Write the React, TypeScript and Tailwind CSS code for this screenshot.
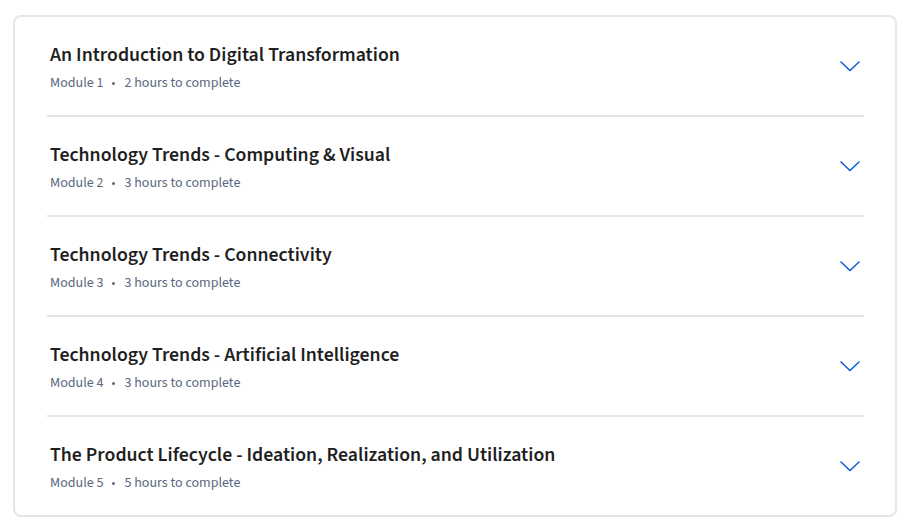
import React from 'react';

const modules = [
  { title: 'An Introduction to Digital Transformation', module: 'Module 1', hours: '2 hours to complete' },
  { title: 'Technology Trends - Computing & Visual', module: 'Module 2', hours: '3 hours to complete' },
  { title: 'Technology Trends - Connectivity', module: 'Module 3', hours: '3 hours to complete' },
  { title: 'Technology Trends - Artificial Intelligence', module: 'Module 4', hours: '3 hours to complete' },
  { title: 'The Product Lifecycle - Ideation, Realization, and Utilization', module: 'Module 5', hours: '5 hours to complete' },
];

const Chevron: React.FC = () => (
  <svg width="22" height="12" viewBox="0 0 22 12" fill="none" className="text-[#0056d2]">
    <path d="M1.5 1.5 L11 10.5 L20.5 1.5" stroke="currentColor" strokeWidth="1.3" />
  </svg>
);

const App: React.FC = () => {
  return (
    <div className="w-[911px] h-[529px] bg-white pt-[15px] pl-[13px]" style={{ fontFamily: '"Source Sans 3", "Source Sans Pro", Lato, sans-serif' }}>
      <div className="w-[884px] rounded-[8px] border-2 border-[#e6e6e6] bg-white pl-[32px] pr-[31px]">
        {modules.map((m, i) => (
          <div
            key={i}
            className={`flex items-center justify-between pl-[3px] pr-[3px] ${i < modules.length - 1 ? 'h-[100px] border-b-2 border-[#e6e6e6]' : 'h-[98px]'}`}
          >
            <div className="pt-[2px]">
              <h3 className="text-[19.8px] leading-7 font-semibold text-[#1f1f1f]">{m.title}</h3>
              <p className="mt-[4px] text-[14px] leading-5 text-[#5b6780] flex items-center">
                <span>{m.module}</span>
                <span className="mx-[9px] inline-block w-[3px] h-[3px] rounded-full bg-[#5b6780]" />
                <span>{m.hours}</span>
              </p>
            </div>
            <Chevron />
          </div>
        ))}
      </div>
    </div>
  );
};

export default App;
